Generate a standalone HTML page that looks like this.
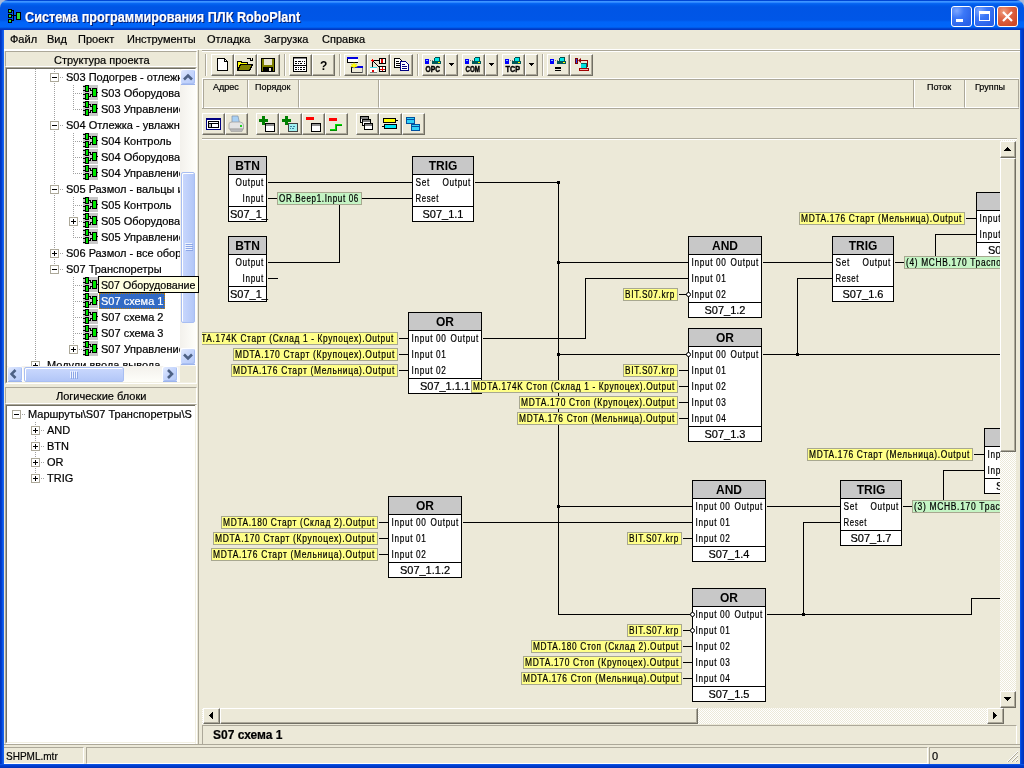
<!DOCTYPE html><html><head><meta charset="utf-8"><style>
html,body{margin:0;padding:0;width:1024px;height:768px;overflow:hidden;background:#A8B8D8}
#root>div,#root>svg{position:absolute}
div{box-sizing:border-box}
.t{position:absolute;white-space:pre;font-family:"Liberation Sans",sans-serif;-webkit-text-stroke:0.2px currentColor}
</style></head><body><div id="root" style="position:absolute;left:0;top:0;width:1024px;height:768px;will-change:transform">
<div style="position:absolute;left:0px;top:0px;width:1024px;height:30px;background:linear-gradient(#0046D5 0,#0046D5 1px,#3D95FF 1px,#3D95FF 2px,#2C85FF 2px,#2C85FF 3px,#0A6AF4 3px,#005CEB 5px,#0055E5 7px,#0056E7 20px,#0064F8 22px,#0066FA 27px,#0052DD 28px,#0038C4 29px,#0038C4 30px);border-radius:8px 8px 0 0"></div>
<div style="position:absolute;left:0px;top:30px;width:4px;height:738px;background:linear-gradient(90deg,#0031B8,#0043D8 2px,#1562F0 3px)"></div>
<div style="position:absolute;left:1020px;top:30px;width:4px;height:738px;background:linear-gradient(90deg,#1562F0,#0043D8 1px,#0031B8 4px)"></div>
<div style="position:absolute;left:0px;top:764px;width:1024px;height:4px;background:linear-gradient(#1562F0,#0043D8 1px,#0031B8 4px)"></div>
<div style="position:absolute;left:4px;top:30px;width:1016px;height:734px;background:#ECE9D8"></div>
<svg style="position:absolute;left:8px;top:9px;" width="13" height="14" viewBox="0 0 13 14" shape-rendering="crispEdges"><rect x="0.5" y="0.5" width="3" height="3" fill="#33DD33" stroke="#000"/><rect x="0.5" y="5.5" width="3" height="3" fill="#33DD33" stroke="#000"/><rect x="0.5" y="10.5" width="3" height="3" fill="#33DD33" stroke="#000"/><path d="M4 1.5H5.5V11.5H4M4 6.5H8" stroke="#000" fill="none"/><rect x="8.5" y="3.5" width="4" height="7" fill="#33DD33" stroke="#000"/></svg>
<div class="t" style="left:26px;top:10px;font-size:15px;line-height:15px;font-weight:700;color:#0A1E6E;transform:scaleX(0.843);transform-origin:0 0">Система программирования ПЛК RoboPlant</div>
<div class="t" style="left:25px;top:9px;font-size:15px;line-height:15px;font-weight:700;color:#fff;transform:scaleX(0.843);transform-origin:0 0">Система программирования ПЛК RoboPlant</div>
<div style="position:absolute;left:951px;top:6px;width:21px;height:21px;background:radial-gradient(circle at 25% 20%,#7FA8FF 0,#3C78F8 35%,#2A62E8 80%);border:1px solid #fff;box-sizing:border-box;border-radius:3px"></div>
<div style="position:absolute;left:974px;top:6px;width:21px;height:21px;background:radial-gradient(circle at 25% 20%,#7FA8FF 0,#3C78F8 35%,#2A62E8 80%);border:1px solid #fff;box-sizing:border-box;border-radius:3px"></div>
<div style="position:absolute;left:997px;top:6px;width:21px;height:21px;background:radial-gradient(circle at 30% 25%,#F0A080 0,#E06848 35%,#D04A28 80%);border:1px solid #fff;box-sizing:border-box;border-radius:3px"></div>
<div style="position:absolute;left:956px;top:19px;width:7px;height:3px;background:#fff"></div>
<div style="position:absolute;left:979px;top:11px;width:11px;height:10px;border:1px solid #fff;border-top-width:3px;box-sizing:border-box"></div>
<svg style="position:absolute;left:1001px;top:10px;" width="13" height="13" viewBox="0 0 13 13" shape-rendering="crispEdges"><path d="M2 2L11 11M11 2L2 11" stroke="#fff" stroke-width="2.2" shape-rendering="geometricPrecision"/></svg>
<div class="t" style="left:10px;top:34px;font-size:11px;line-height:11px;font-weight:400;color:#000;">Файл</div>
<div class="t" style="left:47px;top:34px;font-size:11px;line-height:11px;font-weight:400;color:#000;">Вид</div>
<div class="t" style="left:78px;top:34px;font-size:11px;line-height:11px;font-weight:400;color:#000;">Проект</div>
<div class="t" style="left:127px;top:34px;font-size:11px;line-height:11px;font-weight:400;color:#000;">Инструменты</div>
<div class="t" style="left:207px;top:34px;font-size:11px;line-height:11px;font-weight:400;color:#000;">Отладка</div>
<div class="t" style="left:264px;top:34px;font-size:11px;line-height:11px;font-weight:400;color:#000;">Загрузка</div>
<div class="t" style="left:322px;top:34px;font-size:11px;line-height:11px;font-weight:400;color:#000;">Справка</div>
<div style="position:absolute;left:4px;top:49px;width:1016px;height:1px;background:#fff"></div>
<div style="position:absolute;left:4px;top:50px;width:194px;height:1px;background:#fff"></div>
<div style="position:absolute;left:5px;top:51px;width:192px;height:16px;background:#ECE9D8;border-top:1px solid #ACA899;border-left:1px solid #ACA899;border-right:1px solid #fff;border-bottom:1px solid #fff"></div>
<div class="t" style="left:54px;top:55px;font-size:11px;line-height:11px;font-weight:400;color:#000;">Структура проекта</div>
<div style="position:absolute;left:5px;top:67px;width:192px;height:317px;background:#fff;border-top:1px solid #ACA899;border-left:1px solid #ACA899;border-right:1px solid #fff;border-bottom:1px solid #fff"></div>
<div style="position:absolute;left:6px;top:68px;width:190px;height:315px;border-top:1px solid #716F64;border-left:1px solid #716F64;border-right:1px solid #F1EFE2;border-bottom:1px solid #F1EFE2"></div>
<div style="position:absolute;left:7px;top:69px;width:174px;height:297px;overflow:hidden">
<div style="position:absolute;left:28px;top:0px;width:1px;height:297px;background:repeating-linear-gradient(#A0A0A0 0 1px,transparent 1px 2px)"></div>
<div style="position:absolute;left:47px;top:0px;width:1px;height:200px;background:repeating-linear-gradient(#A0A0A0 0 1px,transparent 1px 2px)"></div>
<div style="position:absolute;left:66px;top:16px;width:1px;height:24px;background:repeating-linear-gradient(#A0A0A0 0 1px,transparent 1px 2px)"></div>
<div style="position:absolute;left:66px;top:64px;width:1px;height:40px;background:repeating-linear-gradient(#A0A0A0 0 1px,transparent 1px 2px)"></div>
<div style="position:absolute;left:66px;top:128px;width:1px;height:40px;background:repeating-linear-gradient(#A0A0A0 0 1px,transparent 1px 2px)"></div>
<div style="position:absolute;left:66px;top:208px;width:1px;height:72px;background:repeating-linear-gradient(#A0A0A0 0 1px,transparent 1px 2px)"></div>
<svg style="position:absolute;left:43px;top:4px;" width="9" height="9" viewBox="0 0 9 9" shape-rendering="crispEdges"><rect x="0.5" y="0.5" width="8" height="8" fill="#fff" stroke="#ACA899"/><rect x="2" y="4" width="5" height="1" fill="#000"/></svg>
<div style="position:absolute;left:53px;top:8px;width:4px;height:1px;background:repeating-linear-gradient(90deg,#A0A0A0 0 1px,transparent 1px 2px)"></div>
<div class="t" style="left:59px;top:3px;font-size:11px;line-height:11px;font-weight:400;color:#000;">S03 Подогрев - отлежки</div>
<div style="position:absolute;left:66px;top:24px;width:9px;height:1px;background:repeating-linear-gradient(90deg,#A0A0A0 0 1px,transparent 1px 2px)"></div>
<svg style="position:absolute;left:76px;top:16px;" width="15" height="15" viewBox="0 0 15 15" shape-rendering="crispEdges"><rect width="15" height="15" fill="#C8C8C8"/><path d="M0 1.5H2M0 5.5H2M0 9.5H2M0 13.5H2M14 7.5H15M6 3.5H7.5V5.5H9M6 11.5H7.5V9.5H9" stroke="#000" fill="none"/><rect x="2.5" y="0.5" width="3" height="6" fill="#00E800" stroke="#000"/><rect x="2.5" y="8.5" width="3" height="6" fill="#00E800" stroke="#000"/><rect x="9.5" y="3.5" width="4" height="8" fill="#00E800" stroke="#000"/></svg>
<div class="t" style="left:94px;top:19px;font-size:11px;line-height:11px;font-weight:400;color:#000;">S03 Оборудование</div>
<div style="position:absolute;left:66px;top:40px;width:9px;height:1px;background:repeating-linear-gradient(90deg,#A0A0A0 0 1px,transparent 1px 2px)"></div>
<svg style="position:absolute;left:76px;top:32px;" width="15" height="15" viewBox="0 0 15 15" shape-rendering="crispEdges"><rect width="15" height="15" fill="#C8C8C8"/><path d="M0 1.5H2M0 5.5H2M0 9.5H2M0 13.5H2M14 7.5H15M6 3.5H7.5V5.5H9M6 11.5H7.5V9.5H9" stroke="#000" fill="none"/><rect x="2.5" y="0.5" width="3" height="6" fill="#00E800" stroke="#000"/><rect x="2.5" y="8.5" width="3" height="6" fill="#00E800" stroke="#000"/><rect x="9.5" y="3.5" width="4" height="8" fill="#00E800" stroke="#000"/></svg>
<div class="t" style="left:94px;top:35px;font-size:11px;line-height:11px;font-weight:400;color:#000;">S03 Управление</div>
<svg style="position:absolute;left:43px;top:52px;" width="9" height="9" viewBox="0 0 9 9" shape-rendering="crispEdges"><rect x="0.5" y="0.5" width="8" height="8" fill="#fff" stroke="#ACA899"/><rect x="2" y="4" width="5" height="1" fill="#000"/></svg>
<div style="position:absolute;left:53px;top:56px;width:4px;height:1px;background:repeating-linear-gradient(90deg,#A0A0A0 0 1px,transparent 1px 2px)"></div>
<div class="t" style="left:59px;top:51px;font-size:11px;line-height:11px;font-weight:400;color:#000;">S04 Отлежка - увлажнение</div>
<div style="position:absolute;left:66px;top:72px;width:9px;height:1px;background:repeating-linear-gradient(90deg,#A0A0A0 0 1px,transparent 1px 2px)"></div>
<svg style="position:absolute;left:76px;top:64px;" width="15" height="15" viewBox="0 0 15 15" shape-rendering="crispEdges"><rect width="15" height="15" fill="#C8C8C8"/><path d="M0 1.5H2M0 5.5H2M0 9.5H2M0 13.5H2M14 7.5H15M6 3.5H7.5V5.5H9M6 11.5H7.5V9.5H9" stroke="#000" fill="none"/><rect x="2.5" y="0.5" width="3" height="6" fill="#00E800" stroke="#000"/><rect x="2.5" y="8.5" width="3" height="6" fill="#00E800" stroke="#000"/><rect x="9.5" y="3.5" width="4" height="8" fill="#00E800" stroke="#000"/></svg>
<div class="t" style="left:94px;top:67px;font-size:11px;line-height:11px;font-weight:400;color:#000;">S04 Контроль</div>
<div style="position:absolute;left:66px;top:88px;width:9px;height:1px;background:repeating-linear-gradient(90deg,#A0A0A0 0 1px,transparent 1px 2px)"></div>
<svg style="position:absolute;left:76px;top:80px;" width="15" height="15" viewBox="0 0 15 15" shape-rendering="crispEdges"><rect width="15" height="15" fill="#C8C8C8"/><path d="M0 1.5H2M0 5.5H2M0 9.5H2M0 13.5H2M14 7.5H15M6 3.5H7.5V5.5H9M6 11.5H7.5V9.5H9" stroke="#000" fill="none"/><rect x="2.5" y="0.5" width="3" height="6" fill="#00E800" stroke="#000"/><rect x="2.5" y="8.5" width="3" height="6" fill="#00E800" stroke="#000"/><rect x="9.5" y="3.5" width="4" height="8" fill="#00E800" stroke="#000"/></svg>
<div class="t" style="left:94px;top:83px;font-size:11px;line-height:11px;font-weight:400;color:#000;">S04 Оборудование</div>
<div style="position:absolute;left:66px;top:104px;width:9px;height:1px;background:repeating-linear-gradient(90deg,#A0A0A0 0 1px,transparent 1px 2px)"></div>
<svg style="position:absolute;left:76px;top:96px;" width="15" height="15" viewBox="0 0 15 15" shape-rendering="crispEdges"><rect width="15" height="15" fill="#C8C8C8"/><path d="M0 1.5H2M0 5.5H2M0 9.5H2M0 13.5H2M14 7.5H15M6 3.5H7.5V5.5H9M6 11.5H7.5V9.5H9" stroke="#000" fill="none"/><rect x="2.5" y="0.5" width="3" height="6" fill="#00E800" stroke="#000"/><rect x="2.5" y="8.5" width="3" height="6" fill="#00E800" stroke="#000"/><rect x="9.5" y="3.5" width="4" height="8" fill="#00E800" stroke="#000"/></svg>
<div class="t" style="left:94px;top:99px;font-size:11px;line-height:11px;font-weight:400;color:#000;">S04 Управление</div>
<svg style="position:absolute;left:43px;top:116px;" width="9" height="9" viewBox="0 0 9 9" shape-rendering="crispEdges"><rect x="0.5" y="0.5" width="8" height="8" fill="#fff" stroke="#ACA899"/><rect x="2" y="4" width="5" height="1" fill="#000"/></svg>
<div style="position:absolute;left:53px;top:120px;width:4px;height:1px;background:repeating-linear-gradient(90deg,#A0A0A0 0 1px,transparent 1px 2px)"></div>
<div class="t" style="left:59px;top:115px;font-size:11px;line-height:11px;font-weight:400;color:#000;">S05 Размол - вальцы и</div>
<div style="position:absolute;left:66px;top:136px;width:9px;height:1px;background:repeating-linear-gradient(90deg,#A0A0A0 0 1px,transparent 1px 2px)"></div>
<svg style="position:absolute;left:76px;top:128px;" width="15" height="15" viewBox="0 0 15 15" shape-rendering="crispEdges"><rect width="15" height="15" fill="#C8C8C8"/><path d="M0 1.5H2M0 5.5H2M0 9.5H2M0 13.5H2M14 7.5H15M6 3.5H7.5V5.5H9M6 11.5H7.5V9.5H9" stroke="#000" fill="none"/><rect x="2.5" y="0.5" width="3" height="6" fill="#00E800" stroke="#000"/><rect x="2.5" y="8.5" width="3" height="6" fill="#00E800" stroke="#000"/><rect x="9.5" y="3.5" width="4" height="8" fill="#00E800" stroke="#000"/></svg>
<div class="t" style="left:94px;top:131px;font-size:11px;line-height:11px;font-weight:400;color:#000;">S05 Контроль</div>
<div style="position:absolute;left:66px;top:152px;width:9px;height:1px;background:repeating-linear-gradient(90deg,#A0A0A0 0 1px,transparent 1px 2px)"></div>
<svg style="position:absolute;left:62px;top:148px;" width="9" height="9" viewBox="0 0 9 9" shape-rendering="crispEdges"><rect x="0.5" y="0.5" width="8" height="8" fill="#fff" stroke="#ACA899"/><rect x="2" y="4" width="5" height="1" fill="#000"/><rect x="4" y="2" width="1" height="5" fill="#000"/></svg>
<svg style="position:absolute;left:76px;top:144px;" width="15" height="15" viewBox="0 0 15 15" shape-rendering="crispEdges"><rect width="15" height="15" fill="#C8C8C8"/><path d="M0 1.5H2M0 5.5H2M0 9.5H2M0 13.5H2M14 7.5H15M6 3.5H7.5V5.5H9M6 11.5H7.5V9.5H9" stroke="#000" fill="none"/><rect x="2.5" y="0.5" width="3" height="6" fill="#00E800" stroke="#000"/><rect x="2.5" y="8.5" width="3" height="6" fill="#00E800" stroke="#000"/><rect x="9.5" y="3.5" width="4" height="8" fill="#00E800" stroke="#000"/></svg>
<div class="t" style="left:94px;top:147px;font-size:11px;line-height:11px;font-weight:400;color:#000;">S05 Оборудование</div>
<div style="position:absolute;left:66px;top:168px;width:9px;height:1px;background:repeating-linear-gradient(90deg,#A0A0A0 0 1px,transparent 1px 2px)"></div>
<svg style="position:absolute;left:76px;top:160px;" width="15" height="15" viewBox="0 0 15 15" shape-rendering="crispEdges"><rect width="15" height="15" fill="#C8C8C8"/><path d="M0 1.5H2M0 5.5H2M0 9.5H2M0 13.5H2M14 7.5H15M6 3.5H7.5V5.5H9M6 11.5H7.5V9.5H9" stroke="#000" fill="none"/><rect x="2.5" y="0.5" width="3" height="6" fill="#00E800" stroke="#000"/><rect x="2.5" y="8.5" width="3" height="6" fill="#00E800" stroke="#000"/><rect x="9.5" y="3.5" width="4" height="8" fill="#00E800" stroke="#000"/></svg>
<div class="t" style="left:94px;top:163px;font-size:11px;line-height:11px;font-weight:400;color:#000;">S05 Управление</div>
<svg style="position:absolute;left:43px;top:180px;" width="9" height="9" viewBox="0 0 9 9" shape-rendering="crispEdges"><rect x="0.5" y="0.5" width="8" height="8" fill="#fff" stroke="#ACA899"/><rect x="2" y="4" width="5" height="1" fill="#000"/><rect x="4" y="2" width="1" height="5" fill="#000"/></svg>
<div style="position:absolute;left:53px;top:184px;width:4px;height:1px;background:repeating-linear-gradient(90deg,#A0A0A0 0 1px,transparent 1px 2px)"></div>
<div class="t" style="left:59px;top:179px;font-size:11px;line-height:11px;font-weight:400;color:#000;">S06 Размол - все оборудование</div>
<svg style="position:absolute;left:43px;top:196px;" width="9" height="9" viewBox="0 0 9 9" shape-rendering="crispEdges"><rect x="0.5" y="0.5" width="8" height="8" fill="#fff" stroke="#ACA899"/><rect x="2" y="4" width="5" height="1" fill="#000"/></svg>
<div style="position:absolute;left:53px;top:200px;width:4px;height:1px;background:repeating-linear-gradient(90deg,#A0A0A0 0 1px,transparent 1px 2px)"></div>
<div class="t" style="left:59px;top:195px;font-size:11px;line-height:11px;font-weight:400;color:#000;">S07 Транспоретры</div>
<div style="position:absolute;left:66px;top:216px;width:9px;height:1px;background:repeating-linear-gradient(90deg,#A0A0A0 0 1px,transparent 1px 2px)"></div>
<svg style="position:absolute;left:76px;top:208px;" width="15" height="15" viewBox="0 0 15 15" shape-rendering="crispEdges"><rect width="15" height="15" fill="#C8C8C8"/><path d="M0 1.5H2M0 5.5H2M0 9.5H2M0 13.5H2M14 7.5H15M6 3.5H7.5V5.5H9M6 11.5H7.5V9.5H9" stroke="#000" fill="none"/><rect x="2.5" y="0.5" width="3" height="6" fill="#00E800" stroke="#000"/><rect x="2.5" y="8.5" width="3" height="6" fill="#00E800" stroke="#000"/><rect x="9.5" y="3.5" width="4" height="8" fill="#00E800" stroke="#000"/></svg>
<div class="t" style="left:94px;top:211px;font-size:11px;line-height:11px;font-weight:400;color:#000;">S07 Оборудование</div>
<div style="position:absolute;left:66px;top:232px;width:9px;height:1px;background:repeating-linear-gradient(90deg,#A0A0A0 0 1px,transparent 1px 2px)"></div>
<svg style="position:absolute;left:76px;top:224px;" width="15" height="15" viewBox="0 0 15 15" shape-rendering="crispEdges"><rect width="15" height="15" fill="#C8C8C8"/><path d="M0 1.5H2M0 5.5H2M0 9.5H2M0 13.5H2M14 7.5H15M6 3.5H7.5V5.5H9M6 11.5H7.5V9.5H9" stroke="#000" fill="none"/><rect x="2.5" y="0.5" width="3" height="6" fill="#00E800" stroke="#000"/><rect x="2.5" y="8.5" width="3" height="6" fill="#00E800" stroke="#000"/><rect x="9.5" y="3.5" width="4" height="8" fill="#00E800" stroke="#000"/></svg>
<div style="position:absolute;left:92px;top:224px;width:66px;height:16px;background:#316AC5;border:1px dotted #C08000"></div>
<div class="t" style="left:94px;top:227px;font-size:11px;line-height:11px;font-weight:400;color:#fff;">S07 схема 1</div>
<div style="position:absolute;left:66px;top:248px;width:9px;height:1px;background:repeating-linear-gradient(90deg,#A0A0A0 0 1px,transparent 1px 2px)"></div>
<svg style="position:absolute;left:76px;top:240px;" width="15" height="15" viewBox="0 0 15 15" shape-rendering="crispEdges"><rect width="15" height="15" fill="#C8C8C8"/><path d="M0 1.5H2M0 5.5H2M0 9.5H2M0 13.5H2M14 7.5H15M6 3.5H7.5V5.5H9M6 11.5H7.5V9.5H9" stroke="#000" fill="none"/><rect x="2.5" y="0.5" width="3" height="6" fill="#00E800" stroke="#000"/><rect x="2.5" y="8.5" width="3" height="6" fill="#00E800" stroke="#000"/><rect x="9.5" y="3.5" width="4" height="8" fill="#00E800" stroke="#000"/></svg>
<div class="t" style="left:94px;top:243px;font-size:11px;line-height:11px;font-weight:400;color:#000;">S07 схема 2</div>
<div style="position:absolute;left:66px;top:264px;width:9px;height:1px;background:repeating-linear-gradient(90deg,#A0A0A0 0 1px,transparent 1px 2px)"></div>
<svg style="position:absolute;left:76px;top:256px;" width="15" height="15" viewBox="0 0 15 15" shape-rendering="crispEdges"><rect width="15" height="15" fill="#C8C8C8"/><path d="M0 1.5H2M0 5.5H2M0 9.5H2M0 13.5H2M14 7.5H15M6 3.5H7.5V5.5H9M6 11.5H7.5V9.5H9" stroke="#000" fill="none"/><rect x="2.5" y="0.5" width="3" height="6" fill="#00E800" stroke="#000"/><rect x="2.5" y="8.5" width="3" height="6" fill="#00E800" stroke="#000"/><rect x="9.5" y="3.5" width="4" height="8" fill="#00E800" stroke="#000"/></svg>
<div class="t" style="left:94px;top:259px;font-size:11px;line-height:11px;font-weight:400;color:#000;">S07 схема 3</div>
<div style="position:absolute;left:66px;top:280px;width:9px;height:1px;background:repeating-linear-gradient(90deg,#A0A0A0 0 1px,transparent 1px 2px)"></div>
<svg style="position:absolute;left:62px;top:276px;" width="9" height="9" viewBox="0 0 9 9" shape-rendering="crispEdges"><rect x="0.5" y="0.5" width="8" height="8" fill="#fff" stroke="#ACA899"/><rect x="2" y="4" width="5" height="1" fill="#000"/><rect x="4" y="2" width="1" height="5" fill="#000"/></svg>
<svg style="position:absolute;left:76px;top:272px;" width="15" height="15" viewBox="0 0 15 15" shape-rendering="crispEdges"><rect width="15" height="15" fill="#C8C8C8"/><path d="M0 1.5H2M0 5.5H2M0 9.5H2M0 13.5H2M14 7.5H15M6 3.5H7.5V5.5H9M6 11.5H7.5V9.5H9" stroke="#000" fill="none"/><rect x="2.5" y="0.5" width="3" height="6" fill="#00E800" stroke="#000"/><rect x="2.5" y="8.5" width="3" height="6" fill="#00E800" stroke="#000"/><rect x="9.5" y="3.5" width="4" height="8" fill="#00E800" stroke="#000"/></svg>
<div class="t" style="left:94px;top:275px;font-size:11px;line-height:11px;font-weight:400;color:#000;">S07 Управление</div>
<svg style="position:absolute;left:24px;top:292px;" width="9" height="9" viewBox="0 0 9 9" shape-rendering="crispEdges"><rect x="0.5" y="0.5" width="8" height="8" fill="#fff" stroke="#ACA899"/><rect x="2" y="4" width="5" height="1" fill="#000"/><rect x="4" y="2" width="1" height="5" fill="#000"/></svg>
<div class="t" style="left:40px;top:291px;font-size:11px;line-height:11px;font-weight:400;color:#000;">Модули ввода вывода</div>
</div>
<div style="position:absolute;left:180px;top:69px;width:16px;height:297px;background:linear-gradient(90deg,#F3F1EC,#FEFEFA)"></div>
<div style="position:absolute;left:180px;top:69px;width:16px;height:16px;background:#fff;border-radius:3px"></div>
<div style="position:absolute;left:181px;top:70px;width:14px;height:14px;background:linear-gradient(135deg,#E2EAFE 0%,#C6D6FC 45%,#B6CAF8 100%);border-radius:2px;box-shadow:inset -1px -1px 0 #A9BFF3"></div>
<div style="position:absolute;left:181px;top:84px;width:14px;height:1px;background:#9CB4EC"></div>
<svg style="position:absolute;left:182px;top:73px;" width="12" height="8" viewBox="0 0 12 8" shape-rendering="crispEdges"><path d="M2 6.5L6 2.5L10 6.5" stroke="#4D6185" stroke-width="2.6" fill="none" shape-rendering="geometricPrecision"/></svg>
<div style="position:absolute;left:180px;top:348px;width:16px;height:17px;background:#fff;border-radius:3px"></div>
<div style="position:absolute;left:181px;top:349px;width:14px;height:15px;background:linear-gradient(135deg,#E2EAFE 0%,#C6D6FC 45%,#B6CAF8 100%);border-radius:2px;box-shadow:inset -1px -1px 0 #A9BFF3"></div>
<div style="position:absolute;left:181px;top:364px;width:14px;height:1px;background:#9CB4EC"></div>
<svg style="position:absolute;left:182px;top:353px;" width="12" height="8" viewBox="0 0 12 8" shape-rendering="crispEdges"><path d="M2 1.5L6 5.5L10 1.5" stroke="#4D6185" stroke-width="2.6" fill="none" shape-rendering="geometricPrecision"/></svg>
<div style="position:absolute;left:181px;top:172px;width:14px;height:151px;background:linear-gradient(90deg,#CAD8FD,#BCCEFA 60%,#B2C6F7);border:1px solid #A8BEF2;border-radius:2px;box-shadow:inset 1px 1px 0 #fff"></div>
<svg style="position:absolute;left:184px;top:243px;" width="9" height="8" viewBox="0 0 9 8" shape-rendering="crispEdges"><path d="M1 0.5H8M1 2.5H8M1 4.5H8M1 6.5H8" stroke="#EEF3FE"/><path d="M2 1.5H9M2 3.5H9M2 5.5H9M2 7.5H9" stroke="#8CA6E6"/></svg>
<div style="position:absolute;left:7px;top:366px;width:173px;height:16px;background:linear-gradient(#F3F1EC,#FEFEFA)"></div>
<div style="position:absolute;left:7px;top:366px;width:16px;height:16px;background:#fff;border-radius:3px"></div>
<div style="position:absolute;left:8px;top:367px;width:14px;height:14px;background:linear-gradient(135deg,#E2EAFE 0%,#C6D6FC 45%,#B6CAF8 100%);border-radius:2px;box-shadow:inset -1px -1px 0 #A9BFF3"></div>
<div style="position:absolute;left:8px;top:381px;width:14px;height:1px;background:#9CB4EC"></div>
<svg style="position:absolute;left:10px;top:368px;" width="8" height="12" viewBox="0 0 8 12" shape-rendering="crispEdges"><path d="M5.5 2L1.5 6L5.5 10" stroke="#4D6185" stroke-width="2.6" fill="none" shape-rendering="geometricPrecision"/></svg>
<div style="position:absolute;left:162px;top:366px;width:16px;height:16px;background:#fff;border-radius:3px"></div>
<div style="position:absolute;left:163px;top:367px;width:14px;height:14px;background:linear-gradient(135deg,#E2EAFE 0%,#C6D6FC 45%,#B6CAF8 100%);border-radius:2px;box-shadow:inset -1px -1px 0 #A9BFF3"></div>
<div style="position:absolute;left:163px;top:381px;width:14px;height:1px;background:#9CB4EC"></div>
<svg style="position:absolute;left:166px;top:368px;" width="8" height="12" viewBox="0 0 8 12" shape-rendering="crispEdges"><path d="M2 2L6 6L2 10" stroke="#4D6185" stroke-width="2.6" fill="none" shape-rendering="geometricPrecision"/></svg>
<div style="position:absolute;left:24px;top:367px;width:100px;height:15px;background:linear-gradient(#CAD8FD,#BCCEFA 60%,#B2C6F7);border:1px solid #A8BEF2;border-radius:2px;box-shadow:inset 1px 1px 0 #fff"></div>
<svg style="position:absolute;left:70px;top:370px;" width="8" height="9" viewBox="0 0 8 9" shape-rendering="crispEdges"><path d="M0.5 1V8M2.5 1V8M4.5 1V8M6.5 1V8" stroke="#EEF3FE"/><path d="M1.5 2V9M3.5 2V9M5.5 2V9M7.5 2V9" stroke="#8CA6E6"/></svg>
<div style="position:absolute;left:180px;top:366px;width:16px;height:16px;background:#ECE9D8"></div>
<div style="position:absolute;left:5px;top:387px;width:192px;height:17px;background:#ECE9D8;border-top:1px solid #ACA899;border-left:1px solid #ACA899;border-right:1px solid #fff;border-bottom:1px solid #fff"></div>
<div class="t" style="left:56px;top:391px;font-size:11px;line-height:11px;font-weight:400;color:#000;">Логические блоки</div>
<div style="position:absolute;left:5px;top:404px;width:192px;height:340px;background:#fff;border-top:1px solid #ACA899;border-left:1px solid #ACA899;border-right:1px solid #fff;border-bottom:1px solid #fff"></div>
<div style="position:absolute;left:6px;top:405px;width:190px;height:338px;border-top:1px solid #716F64;border-left:1px solid #716F64;border-right:1px solid #F1EFE2;border-bottom:1px solid #F1EFE2"></div>
<svg style="position:absolute;left:12px;top:410px;" width="9" height="9" viewBox="0 0 9 9" shape-rendering="crispEdges"><rect x="0.5" y="0.5" width="8" height="8" fill="#fff" stroke="#ACA899"/><rect x="2" y="4" width="5" height="1" fill="#000"/></svg>
<div style="position:absolute;left:22px;top:414px;width:4px;height:1px;background:repeating-linear-gradient(90deg,#A0A0A0 0 1px,transparent 1px 2px)"></div>
<div class="t" style="left:28px;top:409px;font-size:11px;line-height:11px;font-weight:400;color:#000;">Маршруты\S07 Транспоретры\S</div>
<div style="position:absolute;left:35px;top:422px;width:1px;height:56px;background:repeating-linear-gradient(#A0A0A0 0 1px,transparent 1px 2px)"></div>
<svg style="position:absolute;left:31px;top:426px;" width="9" height="9" viewBox="0 0 9 9" shape-rendering="crispEdges"><rect x="0.5" y="0.5" width="8" height="8" fill="#fff" stroke="#ACA899"/><rect x="2" y="4" width="5" height="1" fill="#000"/><rect x="4" y="2" width="1" height="5" fill="#000"/></svg>
<div style="position:absolute;left:41px;top:430px;width:4px;height:1px;background:repeating-linear-gradient(90deg,#A0A0A0 0 1px,transparent 1px 2px)"></div>
<div class="t" style="left:47px;top:425px;font-size:11px;line-height:11px;font-weight:400;color:#000;">AND</div>
<svg style="position:absolute;left:31px;top:442px;" width="9" height="9" viewBox="0 0 9 9" shape-rendering="crispEdges"><rect x="0.5" y="0.5" width="8" height="8" fill="#fff" stroke="#ACA899"/><rect x="2" y="4" width="5" height="1" fill="#000"/><rect x="4" y="2" width="1" height="5" fill="#000"/></svg>
<div style="position:absolute;left:41px;top:446px;width:4px;height:1px;background:repeating-linear-gradient(90deg,#A0A0A0 0 1px,transparent 1px 2px)"></div>
<div class="t" style="left:47px;top:441px;font-size:11px;line-height:11px;font-weight:400;color:#000;">BTN</div>
<svg style="position:absolute;left:31px;top:458px;" width="9" height="9" viewBox="0 0 9 9" shape-rendering="crispEdges"><rect x="0.5" y="0.5" width="8" height="8" fill="#fff" stroke="#ACA899"/><rect x="2" y="4" width="5" height="1" fill="#000"/><rect x="4" y="2" width="1" height="5" fill="#000"/></svg>
<div style="position:absolute;left:41px;top:462px;width:4px;height:1px;background:repeating-linear-gradient(90deg,#A0A0A0 0 1px,transparent 1px 2px)"></div>
<div class="t" style="left:47px;top:457px;font-size:11px;line-height:11px;font-weight:400;color:#000;">OR</div>
<svg style="position:absolute;left:31px;top:474px;" width="9" height="9" viewBox="0 0 9 9" shape-rendering="crispEdges"><rect x="0.5" y="0.5" width="8" height="8" fill="#fff" stroke="#ACA899"/><rect x="2" y="4" width="5" height="1" fill="#000"/><rect x="4" y="2" width="1" height="5" fill="#000"/></svg>
<div style="position:absolute;left:41px;top:478px;width:4px;height:1px;background:repeating-linear-gradient(90deg,#A0A0A0 0 1px,transparent 1px 2px)"></div>
<div class="t" style="left:47px;top:473px;font-size:11px;line-height:11px;font-weight:400;color:#000;">TRIG</div>
<div style="position:absolute;left:195px;top:405px;width:2px;height:339px;border-right:1px solid #fff;border-left:1px solid #F1EFE2;background:#fff"></div>
<div style="position:absolute;left:197px;top:50px;width:1px;height:694px;background:#ECE9D8"></div>
<div style="position:absolute;left:198px;top:50px;width:1px;height:694px;background:#ACA899"></div>
<div style="position:absolute;left:98px;top:276px;width:101px;height:17px;background:#FFFFE1;border:1px solid #000"></div>
<div class="t" style="left:101px;top:280px;font-size:11px;line-height:11px;font-weight:400;color:#000;transform:scaleX(0.97);transform-origin:0 0">S07 Оборудование</div>
<div style="position:absolute;left:202px;top:50px;width:818px;height:1px;background:#ACA899"></div>
<div style="position:absolute;left:202px;top:51px;width:818px;height:1px;background:#fff"></div>
<div style="position:absolute;left:205px;top:54px;width:1px;height:22px;background:#ACA899"></div>
<div style="position:absolute;left:206px;top:54px;width:1px;height:22px;background:#fff"></div>
<div style="position:absolute;left:211px;top:54px;width:23px;height:22px;background:#ECE9D8;border-top:1px solid #fff;border-left:1px solid #fff;border-right:1px solid #716F64;border-bottom:1px solid #716F64;box-shadow:inset -1px -1px 0 #ACA899"></div>
<svg style="position:absolute;left:211px;top:54px;" width="23" height="22" viewBox="0 0 23 22" shape-rendering="crispEdges"><path d="M6.5 4.5H13.5L16.5 7.5V16.5H6.5Z" fill="#fff" stroke="#000"/><path d="M13.5 4.5V7.5H16.5" fill="none" stroke="#000"/></svg>
<div style="position:absolute;left:234px;top:54px;width:23px;height:22px;background:#ECE9D8;border-top:1px solid #fff;border-left:1px solid #fff;border-right:1px solid #716F64;border-bottom:1px solid #716F64;box-shadow:inset -1px -1px 0 #ACA899"></div>
<svg style="position:absolute;left:234px;top:54px;" width="23" height="22" viewBox="0 0 23 22" shape-rendering="crispEdges"><path d="M3.5 7.5H7L8 8.5H13.5V10.5H6.5L3.5 16.5Z" fill="#FFFF00" stroke="#000"/><path d="M3.5 16.5L6.5 10.5H18.5L15.5 16.5Z" fill="#808000" stroke="#000"/><path d="M12.5 5.5Q14.5 3.5 17.5 5.5M16 6.5H18.5V4" fill="none" stroke="#000"/></svg>
<div style="position:absolute;left:257px;top:54px;width:23px;height:22px;background:#ECE9D8;border-top:1px solid #fff;border-left:1px solid #fff;border-right:1px solid #716F64;border-bottom:1px solid #716F64;box-shadow:inset -1px -1px 0 #ACA899"></div>
<svg style="position:absolute;left:257px;top:54px;" width="23" height="22" viewBox="0 0 23 22" shape-rendering="crispEdges"><rect x="4.5" y="4.5" width="13" height="13" fill="#808000" stroke="#000"/><rect x="7" y="5" width="8" height="6" fill="#E8E4D0"/><rect x="6" y="13" width="10" height="4" fill="#000"/><rect x="12" y="14" width="2" height="3" fill="#E8E4D0"/></svg>
<div style="position:absolute;left:284px;top:54px;width:1px;height:22px;background:#ACA899"></div>
<div style="position:absolute;left:285px;top:54px;width:1px;height:22px;background:#fff"></div>
<div style="position:absolute;left:289px;top:54px;width:23px;height:22px;background:#ECE9D8;border-top:1px solid #fff;border-left:1px solid #fff;border-right:1px solid #716F64;border-bottom:1px solid #716F64;box-shadow:inset -1px -1px 0 #ACA899"></div>
<svg style="position:absolute;left:289px;top:54px;" width="23" height="22" viewBox="0 0 23 22" shape-rendering="crispEdges"><rect x="4.5" y="3.5" width="13" height="14" fill="#fff" stroke="#000"/><rect x="5" y="4" width="12" height="1" fill="#808080"/><path d="M5 11.5H17" stroke="#000"/><path d="M6 7.5H8M9 7.5H12M13 7.5H14M15 7.5H16M6 9.5H8M9 9.5H10M11 9.5H13M15 9.5H16M6 13.5H8M9 13.5H10M11 13.5H13M14 13.5H16M6 15.5H8M9 15.5H10M11 15.5H13M14 15.5H16" stroke="#000"/></svg>
<div style="position:absolute;left:312px;top:54px;width:23px;height:22px;background:#ECE9D8;border-top:1px solid #fff;border-left:1px solid #fff;border-right:1px solid #716F64;border-bottom:1px solid #716F64;box-shadow:inset -1px -1px 0 #ACA899"></div>
<svg style="position:absolute;left:312px;top:54px;" width="23" height="22" viewBox="0 0 23 22" shape-rendering="crispEdges"><text x="8" y="16" font-family="Liberation Sans" font-weight="bold" font-size="12" fill="#000">?</text></svg>
<div style="position:absolute;left:339px;top:54px;width:1px;height:22px;background:#ACA899"></div>
<div style="position:absolute;left:340px;top:54px;width:1px;height:22px;background:#fff"></div>
<div style="position:absolute;left:344px;top:54px;width:23px;height:22px;background:#ECE9D8;border-top:1px solid #fff;border-left:1px solid #fff;border-right:1px solid #716F64;border-bottom:1px solid #716F64;box-shadow:inset -1px -1px 0 #ACA899"></div>
<svg style="position:absolute;left:344px;top:54px;" width="23" height="22" viewBox="0 0 23 22" shape-rendering="crispEdges"><rect x="3" y="3" width="11" height="2" fill="#0000E0"/><rect x="3" y="5" width="11" height="3" fill="#fff"/><rect x="3" y="8" width="11" height="1" fill="#000"/><rect x="3" y="5" width="1" height="3" fill="#000"/><rect x="7" y="12" width="12" height="2" fill="#0000E0"/><rect x="7" y="12" width="1" height="7" fill="#000"/><rect x="8" y="14" width="11" height="4" fill="#ECE9D8"/><rect x="7" y="18" width="12" height="1" fill="#404040"/><rect x="18" y="14" width="1" height="5" fill="#808080"/><path d="M10 8.5L11 10.5L13 10L12 11.5L13.5 13H11L10 14.5L9 13H6.5L8 11.5L7 10L9 10.5Z" fill="#FFFF00" stroke="#C0C000" stroke-width="0.3" shape-rendering="geometricPrecision"/></svg>
<div style="position:absolute;left:367px;top:54px;width:23px;height:22px;background:#ECE9D8;border-top:1px solid #fff;border-left:1px solid #fff;border-right:1px solid #716F64;border-bottom:1px solid #716F64;box-shadow:inset -1px -1px 0 #ACA899"></div>
<svg style="position:absolute;left:367px;top:54px;" width="23" height="22" viewBox="0 0 23 22" shape-rendering="crispEdges"><path d="M5.5 6.5H12M5.5 6.5V13M5.5 6.5L12 13" stroke="#000" fill="none" shape-rendering="geometricPrecision"/><path d="M4 6.5H7M5.5 5V8" stroke="#FF0000" stroke-width="1.2"/><rect x="12.5" y="4.5" width="6" height="5" fill="#fff" stroke="#000"/><rect x="14" y="5" width="2" height="4" fill="#E00000"/><rect x="12.5" y="12.5" width="6" height="5" fill="#fff" stroke="#000"/><path d="M13 15H18M15.5 13V17" stroke="#E00000" stroke-width="1"/><rect x="3" y="13" width="7" height="6" fill="#fff"/><rect x="3" y="13" width="7" height="1" fill="#40E0F0"/><rect x="5" y="16" width="2" height="2" fill="#E00000"/><rect x="3" y="18" width="7" height="1" fill="#808080"/></svg>
<div style="position:absolute;left:390px;top:54px;width:23px;height:22px;background:#ECE9D8;border-top:1px solid #fff;border-left:1px solid #fff;border-right:1px solid #716F64;border-bottom:1px solid #716F64;box-shadow:inset -1px -1px 0 #ACA899"></div>
<svg style="position:absolute;left:390px;top:54px;" width="23" height="22" viewBox="0 0 23 22" shape-rendering="crispEdges"><path d="M4.5 4.5H9.5L11.5 6.5V13.5H4.5Z" fill="#fff" stroke="#000"/><path d="M6 7.5H9M6 9.5H10M6 11.5H10" stroke="#000"/><path d="M10.5 7.5H15.5L18.5 10.5V16.5H10.5Z" fill="#fff" stroke="#000080"/><path d="M12 10.5H15M12 12.5H17M12 14.5H17" stroke="#000080"/></svg>
<div style="position:absolute;left:417px;top:54px;width:1px;height:22px;background:#ACA899"></div>
<div style="position:absolute;left:418px;top:54px;width:1px;height:22px;background:#fff"></div>
<div style="position:absolute;left:422px;top:54px;width:23px;height:22px;background:#ECE9D8;border-top:1px solid #fff;border-left:1px solid #fff;border-right:1px solid #716F64;border-bottom:1px solid #716F64;box-shadow:inset -1px -1px 0 #ACA899"></div>
<svg style="position:absolute;left:422px;top:54px;" width="23" height="22" viewBox="0 0 23 22" shape-rendering="crispEdges"><rect x="3" y="5" width="4" height="5" fill="#0000FF"/><rect x="4" y="6" width="2" height="1" fill="#80C0FF"/><path d="M8 6.5H9M10 6.5H11" stroke="#808080"/><rect x="13" y="4" width="4" height="3" fill="#00E8E8"/><path d="M12.5 3.5H17.5V7" fill="none" stroke="#005050"/><rect x="12" y="4" width="1" height="3" fill="#005050"/><rect x="10" y="7" width="9" height="3" fill="#005858"/><rect x="16" y="8" width="2" height="1" fill="#FFFF00"/><text x="3.5" y="18" font-family="Liberation Sans" font-weight="bold" font-size="8.5" textLength="14.5" lengthAdjust="spacingAndGlyphs" fill="#000" stroke="#000" stroke-width="0.45">OPC</text></svg>
<div style="position:absolute;left:445px;top:54px;width:13px;height:22px;background:#ECE9D8;border-top:1px solid #fff;border-left:1px solid #fff;border-right:1px solid #716F64;border-bottom:1px solid #716F64;box-shadow:inset -1px -1px 0 #ACA899"></div>
<svg style="position:absolute;left:445px;top:54px;" width="13" height="22" viewBox="0 0 13 22" shape-rendering="crispEdges"><path d="M3 9H9L6 12Z" fill="#000"/></svg>
<div style="position:absolute;left:462px;top:54px;width:23px;height:22px;background:#ECE9D8;border-top:1px solid #fff;border-left:1px solid #fff;border-right:1px solid #716F64;border-bottom:1px solid #716F64;box-shadow:inset -1px -1px 0 #ACA899"></div>
<svg style="position:absolute;left:462px;top:54px;" width="23" height="22" viewBox="0 0 23 22" shape-rendering="crispEdges"><rect x="3" y="5" width="4" height="5" fill="#0000FF"/><rect x="4" y="6" width="2" height="1" fill="#80C0FF"/><path d="M8 6.5H9M10 6.5H11" stroke="#808080"/><rect x="13" y="4" width="4" height="3" fill="#00E8E8"/><path d="M12.5 3.5H17.5V7" fill="none" stroke="#005050"/><rect x="12" y="4" width="1" height="3" fill="#005050"/><rect x="10" y="7" width="9" height="3" fill="#005858"/><rect x="16" y="8" width="2" height="1" fill="#FFFF00"/><text x="3.5" y="18" font-family="Liberation Sans" font-weight="bold" font-size="8.5" textLength="14.5" lengthAdjust="spacingAndGlyphs" fill="#000" stroke="#000" stroke-width="0.45">COM</text></svg>
<div style="position:absolute;left:485px;top:54px;width:13px;height:22px;background:#ECE9D8;border-top:1px solid #fff;border-left:1px solid #fff;border-right:1px solid #716F64;border-bottom:1px solid #716F64;box-shadow:inset -1px -1px 0 #ACA899"></div>
<svg style="position:absolute;left:485px;top:54px;" width="13" height="22" viewBox="0 0 13 22" shape-rendering="crispEdges"><path d="M3 9H9L6 12Z" fill="#000"/></svg>
<div style="position:absolute;left:502px;top:54px;width:23px;height:22px;background:#ECE9D8;border-top:1px solid #fff;border-left:1px solid #fff;border-right:1px solid #716F64;border-bottom:1px solid #716F64;box-shadow:inset -1px -1px 0 #ACA899"></div>
<svg style="position:absolute;left:502px;top:54px;" width="23" height="22" viewBox="0 0 23 22" shape-rendering="crispEdges"><rect x="3" y="5" width="4" height="5" fill="#0000FF"/><rect x="4" y="6" width="2" height="1" fill="#80C0FF"/><path d="M8 6.5H9M10 6.5H11" stroke="#808080"/><rect x="13" y="4" width="4" height="3" fill="#00E8E8"/><path d="M12.5 3.5H17.5V7" fill="none" stroke="#005050"/><rect x="12" y="4" width="1" height="3" fill="#005050"/><rect x="10" y="7" width="9" height="3" fill="#005858"/><rect x="16" y="8" width="2" height="1" fill="#FFFF00"/><text x="3.5" y="18" font-family="Liberation Sans" font-weight="bold" font-size="8.5" textLength="14.5" lengthAdjust="spacingAndGlyphs" fill="#000" stroke="#000" stroke-width="0.45">TCP</text></svg>
<div style="position:absolute;left:525px;top:54px;width:13px;height:22px;background:#ECE9D8;border-top:1px solid #fff;border-left:1px solid #fff;border-right:1px solid #716F64;border-bottom:1px solid #716F64;box-shadow:inset -1px -1px 0 #ACA899"></div>
<svg style="position:absolute;left:525px;top:54px;" width="13" height="22" viewBox="0 0 13 22" shape-rendering="crispEdges"><path d="M3 9H9L6 12Z" fill="#000"/></svg>
<div style="position:absolute;left:542px;top:54px;width:1px;height:22px;background:#ACA899"></div>
<div style="position:absolute;left:543px;top:54px;width:1px;height:22px;background:#fff"></div>
<div style="position:absolute;left:547px;top:54px;width:23px;height:22px;background:#ECE9D8;border-top:1px solid #fff;border-left:1px solid #fff;border-right:1px solid #716F64;border-bottom:1px solid #716F64;box-shadow:inset -1px -1px 0 #ACA899"></div>
<svg style="position:absolute;left:547px;top:54px;" width="23" height="22" viewBox="0 0 23 22" shape-rendering="crispEdges"><rect x="3" y="5" width="4" height="5" fill="#0000FF"/><rect x="4" y="6" width="2" height="1" fill="#80C0FF"/><path d="M8 6.5H9M10 6.5H11" stroke="#808080"/><rect x="13" y="4" width="4" height="3" fill="#00E8E8"/><path d="M12.5 3.5H17.5V7" fill="none" stroke="#005050"/><rect x="12" y="4" width="1" height="3" fill="#005050"/><rect x="10" y="7" width="9" height="3" fill="#005858"/><rect x="16" y="8" width="2" height="1" fill="#FFFF00"/><rect x="8" y="13" width="6" height="1.5" fill="#000"/><rect x="8" y="15.5" width="6" height="1.5" fill="#000"/></svg>
<div style="position:absolute;left:570px;top:54px;width:23px;height:22px;background:#ECE9D8;border-top:1px solid #fff;border-left:1px solid #fff;border-right:1px solid #716F64;border-bottom:1px solid #716F64;box-shadow:inset -1px -1px 0 #ACA899"></div>
<svg style="position:absolute;left:570px;top:54px;" width="23" height="22" viewBox="0 0 23 22" shape-rendering="crispEdges"><rect x="5" y="4" width="3" height="6" fill="#800000"/><rect x="6" y="5" width="1" height="4" fill="#2040FF"/><path d="M10 6.5H17.5V13" fill="none" stroke="#900000" stroke-width="1.5"/><path d="M8 6.5L11 4V9Z" fill="#900000" shape-rendering="geometricPrecision"/><rect x="11" y="10" width="5" height="4" fill="#00E0E0"/><path d="M10.5 9.5H16V14" fill="none" stroke="#006060"/><rect x="9" y="14" width="10" height="3" fill="#A00000"/><rect x="10" y="15" width="8" height="1" fill="#F0B0B0"/></svg>
<div style="position:absolute;left:202px;top:78px;width:817px;height:1px;background:#fff"></div>
<div style="position:absolute;left:202px;top:78px;width:1px;height:31px;background:#fff"></div>
<div style="position:absolute;left:203px;top:79px;width:816px;height:1px;background:#ACA899"></div>
<div style="position:absolute;left:203px;top:79px;width:1px;height:29px;background:#ACA899"></div>
<div style="position:absolute;left:204px;top:80px;width:44px;height:28px;border-right:1px solid #ACA899;border-bottom:1px solid #fff"></div>
<div style="position:absolute;left:248px;top:80px;width:51px;height:28px;border-left:1px solid #fff;border-right:1px solid #ACA899;border-bottom:1px solid #fff"></div>
<div style="position:absolute;left:299px;top:80px;width:80px;height:28px;border-left:1px solid #fff;border-right:1px solid #ACA899;border-bottom:1px solid #fff"></div>
<div style="position:absolute;left:379px;top:80px;width:535px;height:28px;border-left:1px solid #fff;border-right:1px solid #ACA899;border-bottom:1px solid #fff"></div>
<div style="position:absolute;left:914px;top:80px;width:51px;height:28px;border-left:1px solid #fff;border-right:1px solid #ACA899;border-bottom:1px solid #fff"></div>
<div style="position:absolute;left:965px;top:80px;width:54px;height:28px;border-left:1px solid #fff;border-right:1px solid #ACA899;border-bottom:1px solid #fff"></div>
<div class="t" style="left:213px;top:83px;font-size:9px;line-height:9px;font-weight:400;color:#000;">Адрес</div>
<div class="t" style="left:255px;top:83px;font-size:9px;line-height:9px;font-weight:400;color:#000;">Порядок</div>
<div class="t" style="left:927px;top:83px;font-size:9px;line-height:9px;font-weight:400;color:#000;">Поток</div>
<div class="t" style="left:975px;top:83px;font-size:9px;line-height:9px;font-weight:400;color:#000;">Группы</div>
<div style="position:absolute;left:202px;top:108px;width:817px;height:1px;background:#ACA899"></div>
<div style="position:absolute;left:202px;top:113px;width:23px;height:22px;background:#ECE9D8;border-top:1px solid #fff;border-left:1px solid #fff;border-right:1px solid #716F64;border-bottom:1px solid #716F64;box-shadow:inset -1px -1px 0 #ACA899"></div>
<svg style="position:absolute;left:202px;top:113px;" width="23" height="22" viewBox="0 0 23 22" shape-rendering="crispEdges"><rect x="4" y="5" width="15" height="12" fill="#000080"/><rect x="5" y="7" width="13" height="9" fill="#fff"/><rect x="6" y="8" width="11" height="7" fill="#000"/><rect x="7" y="9" width="9" height="1" fill="#fff"/><rect x="7" y="11" width="2" height="3" fill="#C0C0C0"/><rect x="10" y="11" width="6" height="3" fill="#fff"/></svg>
<div style="position:absolute;left:225px;top:113px;width:23px;height:22px;background:#ECE9D8;border-top:1px solid #fff;border-left:1px solid #fff;border-right:1px solid #716F64;border-bottom:1px solid #716F64;box-shadow:inset -1px -1px 0 #ACA899"></div>
<svg style="position:absolute;left:225px;top:113px;" width="23" height="22" viewBox="0 0 23 22" shape-rendering="crispEdges"><path d="M7 3H13L14.5 10H7Z" fill="#A8D0F4" stroke="#8090A8" stroke-width="0.7" shape-rendering="geometricPrecision"/><path d="M4 11Q4 9 7 9H15Q18 9 18.5 12V16H4Z" fill="#E4E4E4" stroke="#9A9A9A" stroke-width="0.7" shape-rendering="geometricPrecision"/><path d="M5 16H18L17 18.5H6Z" fill="#B8B8B8" stroke="#909090" stroke-width="0.5" shape-rendering="geometricPrecision"/><rect x="15" y="12" width="2" height="2" fill="#20D020"/></svg>
<div style="position:absolute;left:256px;top:113px;width:23px;height:22px;background:#ECE9D8;border-top:1px solid #fff;border-left:1px solid #fff;border-right:1px solid #716F64;border-bottom:1px solid #716F64;box-shadow:inset -1px -1px 0 #ACA899"></div>
<svg style="position:absolute;left:256px;top:113px;" width="23" height="22" viewBox="0 0 23 22" shape-rendering="crispEdges"><rect x="3" y="6" width="9" height="3" fill="#008000"/><rect x="6" y="3" width="3" height="9" fill="#008000"/><rect x="9.5" y="10.5" width="9" height="8" fill="#fff" stroke="#000" stroke-width="1"/><rect x="10" y="11" width="8" height="2" fill="#909090"/></svg>
<div style="position:absolute;left:279px;top:113px;width:23px;height:22px;background:#ECE9D8;border-top:1px solid #fff;border-left:1px solid #fff;border-right:1px solid #716F64;border-bottom:1px solid #716F64;box-shadow:inset -1px -1px 0 #ACA899"></div>
<svg style="position:absolute;left:279px;top:113px;" width="23" height="22" viewBox="0 0 23 22" shape-rendering="crispEdges"><rect x="3" y="6" width="9" height="3" fill="#008000"/><rect x="6" y="3" width="3" height="9" fill="#008000"/><rect x="9.5" y="10.5" width="9" height="8" rx="1" fill="#A0F0F0" stroke="#404040"/><path d="M11 13.5H13M14 13.5H16M11 15.5H12M13 15.5H15" stroke="#4080A0"/></svg>
<div style="position:absolute;left:302px;top:113px;width:23px;height:22px;background:#ECE9D8;border-top:1px solid #fff;border-left:1px solid #fff;border-right:1px solid #716F64;border-bottom:1px solid #716F64;box-shadow:inset -1px -1px 0 #ACA899"></div>
<svg style="position:absolute;left:302px;top:113px;" width="23" height="22" viewBox="0 0 23 22" shape-rendering="crispEdges"><rect x="4" y="4" width="8" height="3" fill="#FF0000"/><rect x="9.5" y="10.5" width="9" height="8" fill="#fff" stroke="#000"/><rect x="10" y="11" width="8" height="2" fill="#909090"/></svg>
<div style="position:absolute;left:325px;top:113px;width:23px;height:22px;background:#ECE9D8;border-top:1px solid #fff;border-left:1px solid #fff;border-right:1px solid #716F64;border-bottom:1px solid #716F64;box-shadow:inset -1px -1px 0 #ACA899"></div>
<svg style="position:absolute;left:325px;top:113px;" width="23" height="22" viewBox="0 0 23 22" shape-rendering="crispEdges"><rect x="4" y="5" width="8" height="3" fill="#FF0000"/><path d="M5 16.5H10.5V11.5H17" fill="none" stroke="#00E000" stroke-width="1"/><path d="M5 17.5H11.5V12.5H17" fill="none" stroke="#009000" stroke-width="1"/></svg>
<div style="position:absolute;left:356px;top:113px;width:23px;height:22px;background:#ECE9D8;border-top:1px solid #fff;border-left:1px solid #fff;border-right:1px solid #716F64;border-bottom:1px solid #716F64;box-shadow:inset -1px -1px 0 #ACA899"></div>
<svg style="position:absolute;left:356px;top:113px;" width="23" height="22" viewBox="0 0 23 22" shape-rendering="crispEdges"><rect x="4.5" y="3.5" width="8" height="6" fill="#fff" stroke="#000"/><rect x="5" y="4" width="7" height="1.5" fill="#808080"/><rect x="6.5" y="6.5" width="8" height="6" fill="#fff" stroke="#000"/><rect x="7" y="7" width="7" height="1.5" fill="#808080"/><rect x="8.5" y="10.5" width="8" height="6" fill="#fff" stroke="#000"/><rect x="9" y="11" width="7" height="1.5" fill="#808080"/></svg>
<div style="position:absolute;left:379px;top:113px;width:23px;height:22px;background:#ECE9D8;border-top:1px solid #fff;border-left:1px solid #fff;border-right:1px solid #716F64;border-bottom:1px solid #716F64;box-shadow:inset -1px -1px 0 #ACA899"></div>
<svg style="position:absolute;left:379px;top:113px;" width="23" height="22" viewBox="0 0 23 22" shape-rendering="crispEdges"><rect x="4.5" y="5.5" width="12" height="4" fill="#FFFF00" stroke="#000"/><path d="M17 7.5H19" stroke="#000"/><rect x="5.5" y="11.5" width="12" height="4" fill="#00E8F8" stroke="#000"/><path d="M3 13.5H5" stroke="#000"/></svg>
<div style="position:absolute;left:402px;top:113px;width:23px;height:22px;background:#ECE9D8;border-top:1px solid #fff;border-left:1px solid #fff;border-right:1px solid #716F64;border-bottom:1px solid #716F64;box-shadow:inset -1px -1px 0 #ACA899"></div>
<svg style="position:absolute;left:402px;top:113px;" width="23" height="22" viewBox="0 0 23 22" shape-rendering="crispEdges"><rect x="4.5" y="4.5" width="8" height="6" fill="#30D0F8" stroke="#0050A0"/><path d="M5 6.5H12" stroke="#0050A0"/><rect x="9.5" y="11.5" width="8" height="6" fill="#30D0F8" stroke="#0050A0"/><path d="M10 13.5H17" stroke="#0050A0"/></svg>
<div style="position:absolute;left:202px;top:138px;width:815px;height:1px;background:#ACA899"></div>
<div style="position:absolute;left:202px;top:139px;width:815px;height:1px;background:#fff"></div>
<svg style="position:absolute;left:202px;top:140px" width="798" height="568" viewBox="202 140 798 568" font-family="Liberation Sans" shape-rendering="crispEdges" style="position:absolute;left:202px;top:140px"><path d="M267.5 182.5 L412.5 182.5" fill="none" stroke="#000" stroke-width="1"/><path d="M267.5 198.5 L412.5 198.5" fill="none" stroke="#000" stroke-width="1"/><path d="M339.5 198.5 L339.5 262.5 L267.5 262.5" fill="none" stroke="#000" stroke-width="1"/><path d="M267.5 278.5 L277.5 278.5" fill="none" stroke="#000" stroke-width="1"/><path d="M474.5 182.5 L558.5 182.5 L558.5 614.5 L692.5 614.5" fill="none" stroke="#000" stroke-width="1"/><path d="M558.5 262.5 L688.5 262.5" fill="none" stroke="#000" stroke-width="1"/><path d="M482.5 338.5 L585.5 338.5 L585.5 278.5 L688.5 278.5" fill="none" stroke="#000" stroke-width="1"/><path d="M678.5 294.5 L688.5 294.5" fill="none" stroke="#000" stroke-width="1"/><path d="M762.5 262.5 L832.5 262.5" fill="none" stroke="#000" stroke-width="1"/><path d="M832.5 278.5 L797.5 278.5 L797.5 354.5" fill="none" stroke="#000" stroke-width="1"/><path d="M558.5 354.5 L688.5 354.5" fill="none" stroke="#000" stroke-width="1"/><path d="M762.5 354.5 L1000.5 354.5" fill="none" stroke="#000" stroke-width="1"/><path d="M678.5 370.5 L688.5 370.5" fill="none" stroke="#000" stroke-width="1"/><path d="M678.5 386.5 L688.5 386.5" fill="none" stroke="#000" stroke-width="1"/><path d="M678.5 402.5 L688.5 402.5" fill="none" stroke="#000" stroke-width="1"/><path d="M678.5 418.5 L688.5 418.5" fill="none" stroke="#000" stroke-width="1"/><path d="M894.5 262.5 L904.5 262.5" fill="none" stroke="#000" stroke-width="1"/><path d="M935.5 262.5 L935.5 234.5 L976.5 234.5" fill="none" stroke="#000" stroke-width="1"/><path d="M965.5 218.5 L976.5 218.5" fill="none" stroke="#000" stroke-width="1"/><path d="M398.5 338.5 L408.5 338.5" fill="none" stroke="#000" stroke-width="1"/><path d="M398.5 354.5 L408.5 354.5" fill="none" stroke="#000" stroke-width="1"/><path d="M398.5 370.5 L408.5 370.5" fill="none" stroke="#000" stroke-width="1"/><path d="M973.5 454.5 L984.5 454.5" fill="none" stroke="#000" stroke-width="1"/><path d="M943.5 506.5 L943.5 470.5 L984.5 470.5" fill="none" stroke="#000" stroke-width="1"/><path d="M558.5 506.5 L692.5 506.5" fill="none" stroke="#000" stroke-width="1"/><path d="M462.5 522.5 L692.5 522.5" fill="none" stroke="#000" stroke-width="1"/><path d="M682.5 538.5 L692.5 538.5" fill="none" stroke="#000" stroke-width="1"/><path d="M766.5 506.5 L840.5 506.5" fill="none" stroke="#000" stroke-width="1"/><path d="M840.5 522.5 L803.5 522.5 L803.5 614.5" fill="none" stroke="#000" stroke-width="1"/><path d="M682.5 630.5 L692.5 630.5" fill="none" stroke="#000" stroke-width="1"/><path d="M682.5 646.5 L692.5 646.5" fill="none" stroke="#000" stroke-width="1"/><path d="M682.5 662.5 L692.5 662.5" fill="none" stroke="#000" stroke-width="1"/><path d="M682.5 678.5 L692.5 678.5" fill="none" stroke="#000" stroke-width="1"/><path d="M766.5 614.5 L971.5 614.5 L971.5 598.5 L1000.5 598.5" fill="none" stroke="#000" stroke-width="1"/><path d="M902.5 506.5 L912.5 506.5" fill="none" stroke="#000" stroke-width="1"/><path d="M378.5 522.5 L388.5 522.5" fill="none" stroke="#000" stroke-width="1"/><path d="M378.5 538.5 L388.5 538.5" fill="none" stroke="#000" stroke-width="1"/><path d="M378.5 554.5 L388.5 554.5" fill="none" stroke="#000" stroke-width="1"/><rect x="557" y="181" width="3" height="3" fill="#000"/><rect x="557" y="261" width="3" height="3" fill="#000"/><rect x="557" y="353" width="3" height="3" fill="#000"/><rect x="557" y="505" width="3" height="3" fill="#000"/><rect x="796" y="353" width="3" height="3" fill="#000"/><rect x="802" y="613" width="3" height="3" fill="#000"/><rect x="228.5" y="156.5" width="38" height="65" fill="#fff" stroke="#000"/><rect x="229" y="157" width="37" height="17" fill="#C8C8C8"/><path d="M228 174.5H267M228 206.5H267" stroke="#000"/><text x="247.5" y="170" font-size="12" font-weight="700" text-anchor="middle">BTN</text><text x="264" y="186" font-size="10" font-weight="400" text-anchor="end" textLength="28.5" lengthAdjust="spacingAndGlyphs" letter-spacing="0.8" stroke="#000" stroke-width="0.22">Output</text><text x="264" y="202" font-size="10" font-weight="400" text-anchor="end" textLength="21.5" lengthAdjust="spacingAndGlyphs" letter-spacing="0.8" stroke="#000" stroke-width="0.22">Input</text><text x="230" y="218" font-size="11" font-weight="400" stroke="#000" stroke-width="0.22">S07_1_</text><rect x="228.5" y="236.5" width="38" height="65" fill="#fff" stroke="#000"/><rect x="229" y="237" width="37" height="17" fill="#C8C8C8"/><path d="M228 254.5H267M228 286.5H267" stroke="#000"/><text x="247.5" y="250" font-size="12" font-weight="700" text-anchor="middle">BTN</text><text x="264" y="266" font-size="10" font-weight="400" text-anchor="end" textLength="28.5" lengthAdjust="spacingAndGlyphs" letter-spacing="0.8" stroke="#000" stroke-width="0.22">Output</text><text x="264" y="282" font-size="10" font-weight="400" text-anchor="end" textLength="21.5" lengthAdjust="spacingAndGlyphs" letter-spacing="0.8" stroke="#000" stroke-width="0.22">Input</text><text x="230" y="298" font-size="11" font-weight="400" stroke="#000" stroke-width="0.22">S07_1_</text><rect x="412.5" y="156.5" width="61" height="65" fill="#fff" stroke="#000"/><rect x="413" y="157" width="60" height="17" fill="#C8C8C8"/><path d="M412 174.5H474M412 206.5H474" stroke="#000"/><text x="443.0" y="170" font-size="12" font-weight="700" text-anchor="middle">TRIG</text><text x="415.5" y="186" font-size="10" font-weight="400" textLength="14.5" lengthAdjust="spacingAndGlyphs" letter-spacing="0.8" stroke="#000" stroke-width="0.22">Set</text><text x="471" y="186" font-size="10" font-weight="400" text-anchor="end" textLength="28.5" lengthAdjust="spacingAndGlyphs" letter-spacing="0.8" stroke="#000" stroke-width="0.22">Output</text><text x="415.5" y="202" font-size="10" font-weight="400" textLength="23.5" lengthAdjust="spacingAndGlyphs" letter-spacing="0.8" stroke="#000" stroke-width="0.22">Reset</text><text x="443.0" y="218" font-size="11" font-weight="400" text-anchor="middle" stroke="#000" stroke-width="0.22">S07_1.1</text><rect x="688.5" y="236.5" width="73" height="81" fill="#fff" stroke="#000"/><rect x="689" y="237" width="72" height="17" fill="#C8C8C8"/><path d="M688 254.5H762M688 302.5H762" stroke="#000"/><text x="725.0" y="250" font-size="12" font-weight="700" text-anchor="middle">AND</text><text x="691.5" y="266" font-size="10" font-weight="400" textLength="35" lengthAdjust="spacingAndGlyphs" letter-spacing="0.8" stroke="#000" stroke-width="0.22">Input 00</text><text x="759" y="266" font-size="10" font-weight="400" text-anchor="end" textLength="28.5" lengthAdjust="spacingAndGlyphs" letter-spacing="0.8" stroke="#000" stroke-width="0.22">Output</text><text x="691.5" y="282" font-size="10" font-weight="400" textLength="35" lengthAdjust="spacingAndGlyphs" letter-spacing="0.8" stroke="#000" stroke-width="0.22">Input 01</text><text x="691.5" y="298" font-size="10" font-weight="400" textLength="35" lengthAdjust="spacingAndGlyphs" letter-spacing="0.8" stroke="#000" stroke-width="0.22">Input 02</text><text x="725.0" y="314" font-size="11" font-weight="400" text-anchor="middle" stroke="#000" stroke-width="0.22">S07_1.2</text><rect x="832.5" y="236.5" width="61" height="65" fill="#fff" stroke="#000"/><rect x="833" y="237" width="60" height="17" fill="#C8C8C8"/><path d="M832 254.5H894M832 286.5H894" stroke="#000"/><text x="863.0" y="250" font-size="12" font-weight="700" text-anchor="middle">TRIG</text><text x="835.5" y="266" font-size="10" font-weight="400" textLength="14.5" lengthAdjust="spacingAndGlyphs" letter-spacing="0.8" stroke="#000" stroke-width="0.22">Set</text><text x="891" y="266" font-size="10" font-weight="400" text-anchor="end" textLength="28.5" lengthAdjust="spacingAndGlyphs" letter-spacing="0.8" stroke="#000" stroke-width="0.22">Output</text><text x="835.5" y="282" font-size="10" font-weight="400" textLength="23.5" lengthAdjust="spacingAndGlyphs" letter-spacing="0.8" stroke="#000" stroke-width="0.22">Reset</text><text x="863.0" y="298" font-size="11" font-weight="400" text-anchor="middle" stroke="#000" stroke-width="0.22">S07_1.6</text><rect x="976.5" y="192.5" width="73" height="65" fill="#fff" stroke="#000"/><rect x="977" y="193" width="72" height="17" fill="#C8C8C8"/><path d="M976 210.5H1050M976 242.5H1050" stroke="#000"/><text x="1013.0" y="206" font-size="12" font-weight="700" text-anchor="middle">AND</text><text x="979.5" y="222" font-size="10" font-weight="400" textLength="35" lengthAdjust="spacingAndGlyphs" letter-spacing="0.8" stroke="#000" stroke-width="0.22">Input 00</text><text x="979.5" y="238" font-size="10" font-weight="400" textLength="35" lengthAdjust="spacingAndGlyphs" letter-spacing="0.8" stroke="#000" stroke-width="0.22">Input 01</text><text x="1013.0" y="254" font-size="11" font-weight="400" text-anchor="middle" stroke="#000" stroke-width="0.22">S07_1.1.3</text><rect x="408.5" y="312.5" width="73" height="81" fill="#fff" stroke="#000"/><rect x="409" y="313" width="72" height="17" fill="#C8C8C8"/><path d="M408 330.5H482M408 378.5H482" stroke="#000"/><text x="445.0" y="326" font-size="12" font-weight="700" text-anchor="middle">OR</text><text x="411.5" y="342" font-size="10" font-weight="400" textLength="35" lengthAdjust="spacingAndGlyphs" letter-spacing="0.8" stroke="#000" stroke-width="0.22">Input 00</text><text x="479" y="342" font-size="10" font-weight="400" text-anchor="end" textLength="28.5" lengthAdjust="spacingAndGlyphs" letter-spacing="0.8" stroke="#000" stroke-width="0.22">Output</text><text x="411.5" y="358" font-size="10" font-weight="400" textLength="35" lengthAdjust="spacingAndGlyphs" letter-spacing="0.8" stroke="#000" stroke-width="0.22">Input 01</text><text x="411.5" y="374" font-size="10" font-weight="400" textLength="35" lengthAdjust="spacingAndGlyphs" letter-spacing="0.8" stroke="#000" stroke-width="0.22">Input 02</text><text x="445.0" y="390" font-size="11" font-weight="400" text-anchor="middle" stroke="#000" stroke-width="0.22">S07_1.1.1</text><rect x="688.5" y="328.5" width="73" height="113" fill="#fff" stroke="#000"/><rect x="689" y="329" width="72" height="17" fill="#C8C8C8"/><path d="M688 346.5H762M688 426.5H762" stroke="#000"/><text x="725.0" y="342" font-size="12" font-weight="700" text-anchor="middle">OR</text><text x="691.5" y="358" font-size="10" font-weight="400" textLength="35" lengthAdjust="spacingAndGlyphs" letter-spacing="0.8" stroke="#000" stroke-width="0.22">Input 00</text><text x="759" y="358" font-size="10" font-weight="400" text-anchor="end" textLength="28.5" lengthAdjust="spacingAndGlyphs" letter-spacing="0.8" stroke="#000" stroke-width="0.22">Output</text><text x="691.5" y="374" font-size="10" font-weight="400" textLength="35" lengthAdjust="spacingAndGlyphs" letter-spacing="0.8" stroke="#000" stroke-width="0.22">Input 01</text><text x="691.5" y="390" font-size="10" font-weight="400" textLength="35" lengthAdjust="spacingAndGlyphs" letter-spacing="0.8" stroke="#000" stroke-width="0.22">Input 02</text><text x="691.5" y="406" font-size="10" font-weight="400" textLength="35" lengthAdjust="spacingAndGlyphs" letter-spacing="0.8" stroke="#000" stroke-width="0.22">Input 03</text><text x="691.5" y="422" font-size="10" font-weight="400" textLength="35" lengthAdjust="spacingAndGlyphs" letter-spacing="0.8" stroke="#000" stroke-width="0.22">Input 04</text><text x="725.0" y="438" font-size="11" font-weight="400" text-anchor="middle" stroke="#000" stroke-width="0.22">S07_1.3</text><rect x="984.5" y="428.5" width="73" height="65" fill="#fff" stroke="#000"/><rect x="985" y="429" width="72" height="17" fill="#C8C8C8"/><path d="M984 446.5H1058M984 478.5H1058" stroke="#000"/><text x="1021.0" y="442" font-size="12" font-weight="700" text-anchor="middle">AND</text><text x="987.5" y="458" font-size="10" font-weight="400" textLength="35" lengthAdjust="spacingAndGlyphs" letter-spacing="0.8" stroke="#000" stroke-width="0.22">Input 00</text><text x="987.5" y="474" font-size="10" font-weight="400" textLength="35" lengthAdjust="spacingAndGlyphs" letter-spacing="0.8" stroke="#000" stroke-width="0.22">Input 01</text><text x="1021.0" y="490" font-size="11" font-weight="400" text-anchor="middle" stroke="#000" stroke-width="0.22">S07_1.1.4</text><rect x="388.5" y="496.5" width="73" height="81" fill="#fff" stroke="#000"/><rect x="389" y="497" width="72" height="17" fill="#C8C8C8"/><path d="M388 514.5H462M388 562.5H462" stroke="#000"/><text x="425.0" y="510" font-size="12" font-weight="700" text-anchor="middle">OR</text><text x="391.5" y="526" font-size="10" font-weight="400" textLength="35" lengthAdjust="spacingAndGlyphs" letter-spacing="0.8" stroke="#000" stroke-width="0.22">Input 00</text><text x="459" y="526" font-size="10" font-weight="400" text-anchor="end" textLength="28.5" lengthAdjust="spacingAndGlyphs" letter-spacing="0.8" stroke="#000" stroke-width="0.22">Output</text><text x="391.5" y="542" font-size="10" font-weight="400" textLength="35" lengthAdjust="spacingAndGlyphs" letter-spacing="0.8" stroke="#000" stroke-width="0.22">Input 01</text><text x="391.5" y="558" font-size="10" font-weight="400" textLength="35" lengthAdjust="spacingAndGlyphs" letter-spacing="0.8" stroke="#000" stroke-width="0.22">Input 02</text><text x="425.0" y="574" font-size="11" font-weight="400" text-anchor="middle" stroke="#000" stroke-width="0.22">S07_1.1.2</text><rect x="692.5" y="480.5" width="73" height="81" fill="#fff" stroke="#000"/><rect x="693" y="481" width="72" height="17" fill="#C8C8C8"/><path d="M692 498.5H766M692 546.5H766" stroke="#000"/><text x="729.0" y="494" font-size="12" font-weight="700" text-anchor="middle">AND</text><text x="695.5" y="510" font-size="10" font-weight="400" textLength="35" lengthAdjust="spacingAndGlyphs" letter-spacing="0.8" stroke="#000" stroke-width="0.22">Input 00</text><text x="763" y="510" font-size="10" font-weight="400" text-anchor="end" textLength="28.5" lengthAdjust="spacingAndGlyphs" letter-spacing="0.8" stroke="#000" stroke-width="0.22">Output</text><text x="695.5" y="526" font-size="10" font-weight="400" textLength="35" lengthAdjust="spacingAndGlyphs" letter-spacing="0.8" stroke="#000" stroke-width="0.22">Input 01</text><text x="695.5" y="542" font-size="10" font-weight="400" textLength="35" lengthAdjust="spacingAndGlyphs" letter-spacing="0.8" stroke="#000" stroke-width="0.22">Input 02</text><text x="729.0" y="558" font-size="11" font-weight="400" text-anchor="middle" stroke="#000" stroke-width="0.22">S07_1.4</text><rect x="840.5" y="480.5" width="61" height="65" fill="#fff" stroke="#000"/><rect x="841" y="481" width="60" height="17" fill="#C8C8C8"/><path d="M840 498.5H902M840 530.5H902" stroke="#000"/><text x="871.0" y="494" font-size="12" font-weight="700" text-anchor="middle">TRIG</text><text x="843.5" y="510" font-size="10" font-weight="400" textLength="14.5" lengthAdjust="spacingAndGlyphs" letter-spacing="0.8" stroke="#000" stroke-width="0.22">Set</text><text x="899" y="510" font-size="10" font-weight="400" text-anchor="end" textLength="28.5" lengthAdjust="spacingAndGlyphs" letter-spacing="0.8" stroke="#000" stroke-width="0.22">Output</text><text x="843.5" y="526" font-size="10" font-weight="400" textLength="23.5" lengthAdjust="spacingAndGlyphs" letter-spacing="0.8" stroke="#000" stroke-width="0.22">Reset</text><text x="871.0" y="542" font-size="11" font-weight="400" text-anchor="middle" stroke="#000" stroke-width="0.22">S07_1.7</text><rect x="692.5" y="588.5" width="73" height="113" fill="#fff" stroke="#000"/><rect x="693" y="589" width="72" height="17" fill="#C8C8C8"/><path d="M692 606.5H766M692 686.5H766" stroke="#000"/><text x="729.0" y="602" font-size="12" font-weight="700" text-anchor="middle">OR</text><text x="695.5" y="618" font-size="10" font-weight="400" textLength="35" lengthAdjust="spacingAndGlyphs" letter-spacing="0.8" stroke="#000" stroke-width="0.22">Input 00</text><text x="763" y="618" font-size="10" font-weight="400" text-anchor="end" textLength="28.5" lengthAdjust="spacingAndGlyphs" letter-spacing="0.8" stroke="#000" stroke-width="0.22">Output</text><text x="695.5" y="634" font-size="10" font-weight="400" textLength="35" lengthAdjust="spacingAndGlyphs" letter-spacing="0.8" stroke="#000" stroke-width="0.22">Input 01</text><text x="695.5" y="650" font-size="10" font-weight="400" textLength="35" lengthAdjust="spacingAndGlyphs" letter-spacing="0.8" stroke="#000" stroke-width="0.22">Input 02</text><text x="695.5" y="666" font-size="10" font-weight="400" textLength="35" lengthAdjust="spacingAndGlyphs" letter-spacing="0.8" stroke="#000" stroke-width="0.22">Input 03</text><text x="695.5" y="682" font-size="10" font-weight="400" textLength="35" lengthAdjust="spacingAndGlyphs" letter-spacing="0.8" stroke="#000" stroke-width="0.22">Input 04</text><text x="729.0" y="698" font-size="11" font-weight="400" text-anchor="middle" stroke="#000" stroke-width="0.22">S07_1.5</text><circle cx="688.5" cy="294.5" r="2" fill="#fff" stroke="#000" stroke-width="1" shape-rendering="geometricPrecision"/><circle cx="688.5" cy="354.5" r="2" fill="#fff" stroke="#000" stroke-width="1" shape-rendering="geometricPrecision"/><circle cx="692.5" cy="614.5" r="2" fill="#fff" stroke="#000" stroke-width="1" shape-rendering="geometricPrecision"/><circle cx="692.5" cy="630.5" r="2" fill="#fff" stroke="#000" stroke-width="1" shape-rendering="geometricPrecision"/><rect x="277.5" y="192.5" width="84" height="12" fill="#C4F4C4" stroke="#A8A890"/><text x="279" y="202" font-size="10" font-weight="400" textLength="80" lengthAdjust="spacingAndGlyphs" letter-spacing="0.8" stroke="#000" stroke-width="0.22">OR.Beep1.Input 06</text><rect x="799.5" y="212.5" width="165" height="12" fill="#FFFF88" stroke="#A8A890"/><text x="801" y="222" font-size="10" font-weight="400" textLength="161" lengthAdjust="spacingAndGlyphs" letter-spacing="0.8" stroke="#000" stroke-width="0.22">MDTA.176 Старт (Мельница).Output</text><rect x="623.5" y="288.5" width="54" height="12" fill="#FFFF88" stroke="#A8A890"/><text x="625" y="298" font-size="10" font-weight="400" textLength="50" lengthAdjust="spacingAndGlyphs" letter-spacing="0.8" stroke="#000" stroke-width="0.22">BIT.S07.krp</text><rect x="904.5" y="256.5" width="135" height="12" fill="#C4F4C4" stroke="#A8A890"/><text x="906" y="266" font-size="10" font-weight="400" textLength="124" lengthAdjust="spacingAndGlyphs" letter-spacing="0.8" stroke="#000" stroke-width="0.22">(4) MCHB.170 Траспортер 1</text><rect x="185.5" y="332.5" width="212" height="12" fill="#FFFF88" stroke="#A8A890"/><text x="187" y="342" font-size="10" font-weight="400" textLength="207" lengthAdjust="spacingAndGlyphs" letter-spacing="0.8" stroke="#000" stroke-width="0.22">MDTA.174K Старт (Склад 1 - Крупоцех).Output</text><rect x="233.5" y="348.5" width="164" height="12" fill="#FFFF88" stroke="#A8A890"/><text x="235" y="358" font-size="10" font-weight="400" textLength="160" lengthAdjust="spacingAndGlyphs" letter-spacing="0.8" stroke="#000" stroke-width="0.22">MDTA.170 Старт (Крупоцех).Output</text><rect x="231.5" y="364.5" width="166" height="12" fill="#FFFF88" stroke="#A8A890"/><text x="233" y="374" font-size="10" font-weight="400" textLength="162" lengthAdjust="spacingAndGlyphs" letter-spacing="0.8" stroke="#000" stroke-width="0.22">MDTA.176 Старт (Мельница).Output</text><rect x="471.5" y="380.5" width="206" height="12" fill="#FFFF88" stroke="#A8A890"/><text x="473" y="390" font-size="10" font-weight="400" textLength="202" lengthAdjust="spacingAndGlyphs" letter-spacing="0.8" stroke="#000" stroke-width="0.22">MDTA.174K Стоп (Склад 1 - Крупоцех).Output</text><rect x="519.5" y="396.5" width="158" height="12" fill="#FFFF88" stroke="#A8A890"/><text x="521" y="406" font-size="10" font-weight="400" textLength="154" lengthAdjust="spacingAndGlyphs" letter-spacing="0.8" stroke="#000" stroke-width="0.22">MDTA.170 Стоп (Крупоцех).Output</text><rect x="517.5" y="412.5" width="160" height="12" fill="#FFFF88" stroke="#A8A890"/><text x="519" y="422" font-size="10" font-weight="400" textLength="156" lengthAdjust="spacingAndGlyphs" letter-spacing="0.8" stroke="#000" stroke-width="0.22">MDTA.176 Стоп (Мельница).Output</text><rect x="623.5" y="364.5" width="54" height="12" fill="#FFFF88" stroke="#A8A890"/><text x="625" y="374" font-size="10" font-weight="400" textLength="50" lengthAdjust="spacingAndGlyphs" letter-spacing="0.8" stroke="#000" stroke-width="0.22">BIT.S07.krp</text><rect x="807.5" y="448.5" width="165" height="12" fill="#FFFF88" stroke="#A8A890"/><text x="809" y="458" font-size="10" font-weight="400" textLength="161" lengthAdjust="spacingAndGlyphs" letter-spacing="0.8" stroke="#000" stroke-width="0.22">MDTA.176 Старт (Мельница).Output</text><rect x="912.5" y="500.5" width="135" height="12" fill="#C4F4C4" stroke="#A8A890"/><text x="914" y="510" font-size="10" font-weight="400" textLength="126" lengthAdjust="spacingAndGlyphs" letter-spacing="0.8" stroke="#000" stroke-width="0.22">(3) MCHB.170 Траспортер 1</text><rect x="221.5" y="516.5" width="156" height="12" fill="#FFFF88" stroke="#A8A890"/><text x="223" y="526" font-size="10" font-weight="400" textLength="152" lengthAdjust="spacingAndGlyphs" letter-spacing="0.8" stroke="#000" stroke-width="0.22">MDTA.180 Старт (Склад 2).Output</text><rect x="213.5" y="532.5" width="164" height="12" fill="#FFFF88" stroke="#A8A890"/><text x="215" y="542" font-size="10" font-weight="400" textLength="160" lengthAdjust="spacingAndGlyphs" letter-spacing="0.8" stroke="#000" stroke-width="0.22">MDTA.170 Старт (Крупоцех).Output</text><rect x="211.5" y="548.5" width="166" height="12" fill="#FFFF88" stroke="#A8A890"/><text x="213" y="558" font-size="10" font-weight="400" textLength="162" lengthAdjust="spacingAndGlyphs" letter-spacing="0.8" stroke="#000" stroke-width="0.22">MDTA.176 Старт (Мельница).Output</text><rect x="627.5" y="532.5" width="54" height="12" fill="#FFFF88" stroke="#A8A890"/><text x="629" y="542" font-size="10" font-weight="400" textLength="50" lengthAdjust="spacingAndGlyphs" letter-spacing="0.8" stroke="#000" stroke-width="0.22">BIT.S07.krp</text><rect x="627.5" y="624.5" width="54" height="12" fill="#FFFF88" stroke="#A8A890"/><text x="629" y="634" font-size="10" font-weight="400" textLength="50" lengthAdjust="spacingAndGlyphs" letter-spacing="0.8" stroke="#000" stroke-width="0.22">BIT.S07.krp</text><rect x="531.5" y="640.5" width="150" height="12" fill="#FFFF88" stroke="#A8A890"/><text x="533" y="650" font-size="10" font-weight="400" textLength="146" lengthAdjust="spacingAndGlyphs" letter-spacing="0.8" stroke="#000" stroke-width="0.22">MDTA.180 Стоп (Склад 2).Output</text><rect x="523.5" y="656.5" width="158" height="12" fill="#FFFF88" stroke="#A8A890"/><text x="525" y="666" font-size="10" font-weight="400" textLength="154" lengthAdjust="spacingAndGlyphs" letter-spacing="0.8" stroke="#000" stroke-width="0.22">MDTA.170 Стоп (Крупоцех).Output</text><rect x="521.5" y="672.5" width="160" height="12" fill="#FFFF88" stroke="#A8A890"/><text x="523" y="682" font-size="10" font-weight="400" textLength="156" lengthAdjust="spacingAndGlyphs" letter-spacing="0.8" stroke="#000" stroke-width="0.22">MDTA.176 Стоп (Мельница).Output</text></svg>
<div style="position:absolute;left:1000px;top:140px;width:16px;height:568px;background-color:#ECE9D8;background-image:linear-gradient(45deg,#fff 25%,transparent 25%,transparent 75%,#fff 75%),linear-gradient(45deg,#fff 25%,transparent 25%,transparent 75%,#fff 75%);background-size:2px 2px;background-position:0 0,1px 1px"></div>
<div style="position:absolute;left:1000px;top:141px;width:16px;height:17px;background:#ECE9D8;border-top:1px solid #fff;border-left:1px solid #fff;border-right:1px solid #716F64;border-bottom:1px solid #716F64;box-shadow:inset -1px -1px 0 #ACA899"></div>
<svg style="position:absolute;left:1004px;top:147px;" width="7" height="4" viewBox="0 0 7 4" shape-rendering="crispEdges"><path d="M3.5 0L7 4H0Z" fill="#000"/></svg>
<div style="position:absolute;left:1000px;top:158px;width:16px;height:294px;background:#ECE9D8;border-top:1px solid #fff;border-left:1px solid #fff;border-right:1px solid #716F64;border-bottom:1px solid #716F64;box-shadow:inset -1px -1px 0 #ACA899"></div>
<div style="position:absolute;left:1000px;top:691px;width:16px;height:17px;background:#ECE9D8;border-top:1px solid #fff;border-left:1px solid #fff;border-right:1px solid #716F64;border-bottom:1px solid #716F64;box-shadow:inset -1px -1px 0 #ACA899"></div>
<svg style="position:absolute;left:1004px;top:697px;" width="7" height="4" viewBox="0 0 7 4" shape-rendering="crispEdges"><path d="M0 0H7L3.5 4Z" fill="#000"/></svg>
<div style="position:absolute;left:202px;top:708px;width:798px;height:16px;background-color:#ECE9D8;background-image:linear-gradient(45deg,#fff 25%,transparent 25%,transparent 75%,#fff 75%),linear-gradient(45deg,#fff 25%,transparent 25%,transparent 75%,#fff 75%);background-size:2px 2px;background-position:0 0,1px 1px"></div>
<div style="position:absolute;left:203px;top:708px;width:17px;height:16px;background:#ECE9D8;border-top:1px solid #fff;border-left:1px solid #fff;border-right:1px solid #716F64;border-bottom:1px solid #716F64;box-shadow:inset -1px -1px 0 #ACA899"></div>
<svg style="position:absolute;left:209px;top:712px;" width="4" height="7" viewBox="0 0 4 7" shape-rendering="crispEdges"><path d="M4 0V7L0 3.5Z" fill="#000"/></svg>
<div style="position:absolute;left:220px;top:708px;width:478px;height:16px;background:#ECE9D8;border-top:1px solid #fff;border-left:1px solid #fff;border-right:1px solid #716F64;border-bottom:1px solid #716F64;box-shadow:inset -1px -1px 0 #ACA899"></div>
<div style="position:absolute;left:987px;top:708px;width:17px;height:16px;background:#ECE9D8;border-top:1px solid #fff;border-left:1px solid #fff;border-right:1px solid #716F64;border-bottom:1px solid #716F64;box-shadow:inset -1px -1px 0 #ACA899"></div>
<svg style="position:absolute;left:993px;top:712px;" width="4" height="7" viewBox="0 0 4 7" shape-rendering="crispEdges"><path d="M0 0V7L4 3.5Z" fill="#000"/></svg>
<div style="position:absolute;left:1004px;top:708px;width:13px;height:16px;background:#ECE9D8"></div>
<div style="position:absolute;left:202px;top:725px;width:815px;height:20px;border-top:1px solid #ACA899;border-left:1px solid #ACA899;border-right:1px solid #fff;border-bottom:1px solid #fff"></div>
<div class="t" style="left:213px;top:729px;font-size:12px;line-height:12px;font-weight:700;color:#000;">S07 схема 1</div>
<div style="position:absolute;left:4px;top:744px;width:1016px;height:1px;background:#ACA899"></div>
<div style="position:absolute;left:4px;top:747px;width:80px;height:17px;border-top:1px solid #ACA899;border-right:1px solid #fff;border-bottom:1px solid #fff"></div>
<div class="t" style="left:6px;top:751px;font-size:11px;line-height:11px;font-weight:400;color:#000;transform:scaleX(0.91);transform-origin:0 0">SHPML.mtr</div>
<div style="position:absolute;left:86px;top:747px;width:842px;height:17px;border-top:1px solid #ACA899;border-left:1px solid #ACA899;border-right:1px solid #fff;border-bottom:1px solid #fff"></div>
<div style="position:absolute;left:929px;top:747px;width:91px;height:17px;border-top:1px solid #ACA899;border-left:1px solid #ACA899"></div>
<div class="t" style="left:932px;top:751px;font-size:11px;line-height:11px;font-weight:400;color:#000;">0</div>
<svg style="position:absolute;left:1006px;top:750px;" width="13" height="13" viewBox="0 0 13 13" shape-rendering="crispEdges"><path d="M12 1L1 12M12 5L5 12M12 9L9 12" stroke="#fff" stroke-width="1"/><path d="M12 2L2 12M12 6L6 12M12 10L10 12" stroke="#ACA899" stroke-width="1"/></svg>
</div></body></html>
